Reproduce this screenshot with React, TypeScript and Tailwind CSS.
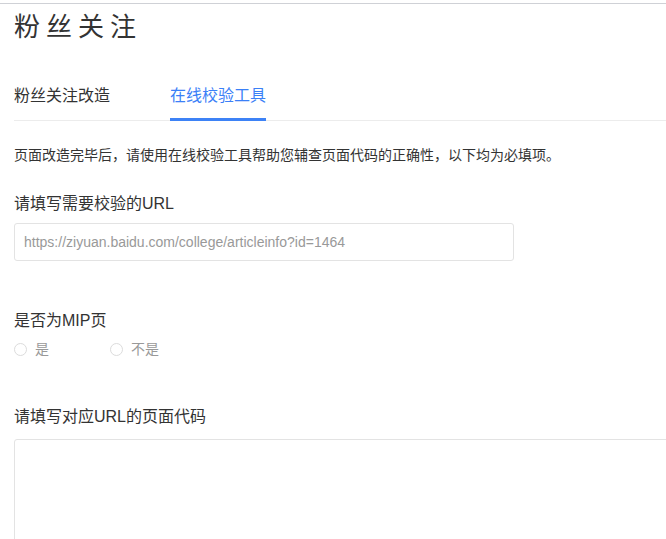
import { useState } from 'react';

export default function App() {
  const [tab, setTab] = useState(1);
  const [mip, setMip] = useState<string | null>(null);

  const tabs = ['粉丝关注改造', '在线校验工具'];

  return (
    <div className="min-h-screen bg-white pt-[3px] overflow-x-hidden font-['Liberation_Sans','Noto_Sans_CJK_SC',sans-serif] text-[#333]">
      <div className="border-t border-[#cfd1d6]">
        <h1 className="mt-[5px] pl-[14px] text-[26px] leading-[36px] tracking-[6px] font-normal text-[#333]">
          粉丝关注
        </h1>

        <div className="mt-[39px] ml-[14px] flex gap-[60px] border-b border-[#ececec]">
          {tabs.map((t, i) => (
            <button
              key={t}
              onClick={() => setTab(i)}
              className={
                i === tab
                  ? 'pb-[10px] border-b-[3px] border-[#3d82f6] text-[16px] leading-[24px] text-[#3b80f7] -mb-px'
                  : 'pb-[10px] border-b-[3px] border-transparent text-[16px] leading-[24px] text-[#333] -mb-px'
              }
            >
              {t}
            </button>
          ))}
        </div>

        <div className="pl-[14px]">
          <p className="mt-[24px] text-[14px] leading-[20px] text-[#333]">
            页面改造完毕后，请使用在线校验工具帮助您辅查页面代码的正确性，以下均为必填项。
          </p>

          <div className="mt-[27px] text-[16px] leading-[24px]">请填写需要校验的URL</div>
          <input
            type="text"
            placeholder="https://ziyuan.baidu.com/college/articleinfo?id=1464"
            className="mt-[7px] h-[38px] w-[500px] rounded-[3px] border border-[#e3e3e3] px-[9px] text-[14px] text-[#333] placeholder:text-[#999] outline-none"
          />

          <div className="mt-[48px] text-[16px] leading-[24px]">是否为MIP页</div>
          <div className="mt-[6px] flex text-[14px] leading-[20px] text-[#999]">
            {['是', '不是'].map((o) => (
              <label key={o} className="flex w-[96px] items-center gap-[8px] cursor-pointer" onClick={() => setMip(o)}>
                <span
                  className={
                    mip === o
                      ? 'h-[13px] w-[13px] rounded-full border-[4px] border-[#3b80f7]'
                      : 'h-[13px] w-[13px] rounded-full border border-[#dcdcdc]'
                  }
                />
                <span>{o}</span>
              </label>
            ))}
          </div>

          <div className="mt-[46px] text-[16px] leading-[24px]">请填写对应URL的页面代码</div>
          <textarea className="mt-[10px] h-[220px] w-[720px] rounded-[3px] border border-[#e3e3e3] p-[9px] text-[13px] outline-none resize-none" />
        </div>
      </div>
    </div>
  );
}
